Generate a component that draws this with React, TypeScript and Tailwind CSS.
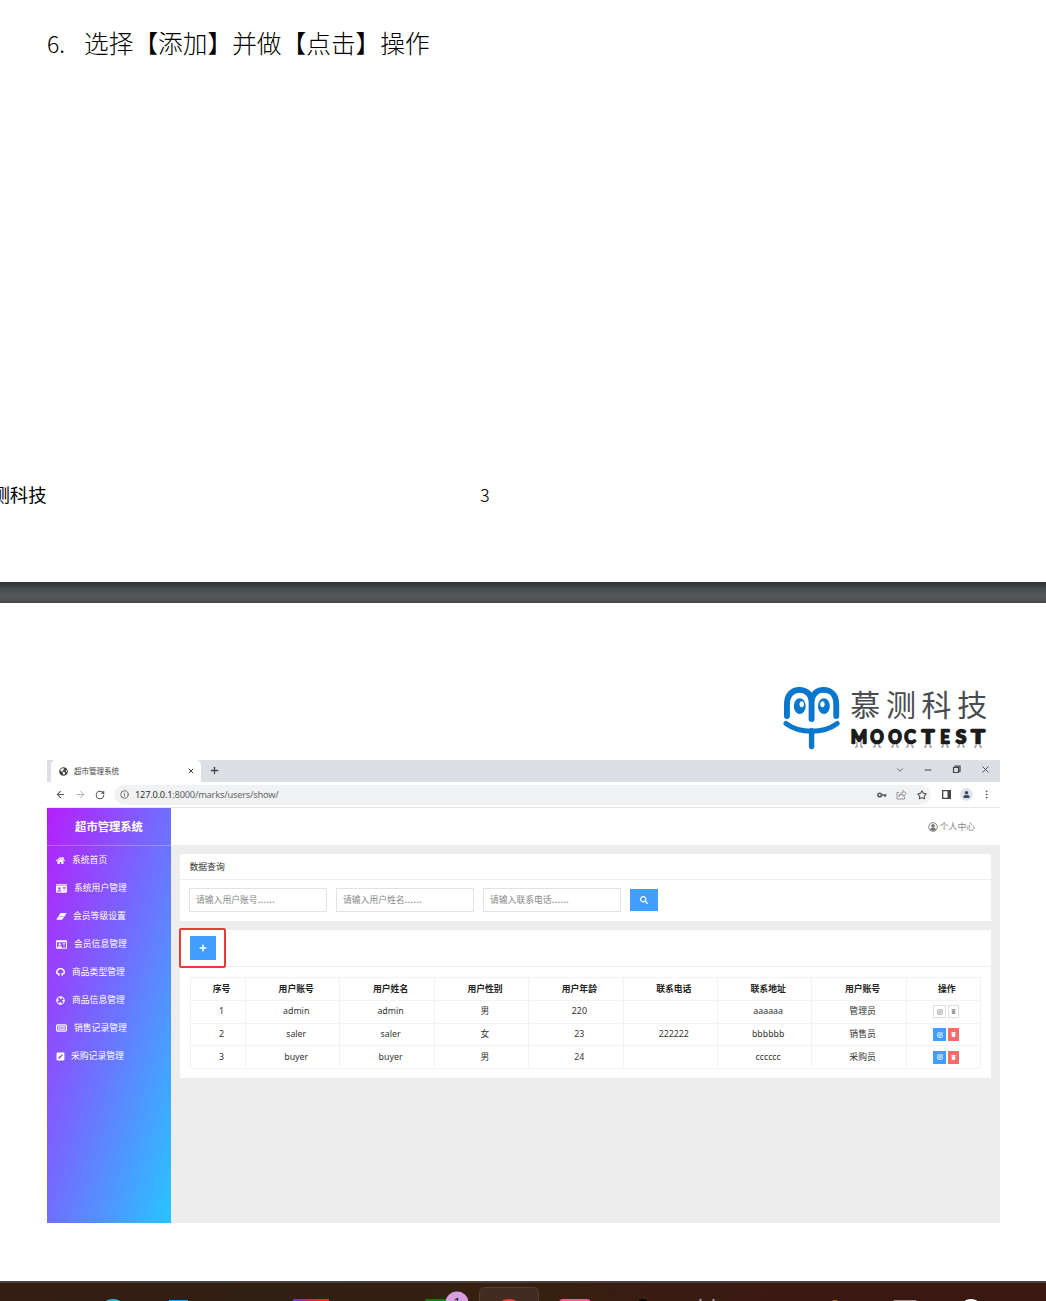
import type { ReactNode } from "react";
import {
  FaHome,
  FaIdCard,
  FaRegIdCard,
  FaPenSquare,
  FaPlus,
  FaSearch,
  FaTrash,
  FaUser,
  FaGlobeAmericas,
} from "react-icons/fa";
import {
  ArrowLeft,
  ArrowRight,
  RotateCw,
  Info,
  Star,
  EllipsisVertical,
  ChevronDown,
  Minus,
  X,
  Plus,
  SquarePen,
} from "lucide-react";

const EraserIcon = () => (
  <svg width="11" height="9" viewBox="0 0 11 9">
    <path d="M4.500 1h5.300c.5 0 .7.400.4.800L6.500 7.200c-.2.300-.5.500-.9.500H1c-.5 0-.7-.4-.4-.8z" fill="#fff" />
    <path d="M2.300 4.700h5.200" stroke="#9a50ff" strokeWidth="0.600" />
  </svg>
);

const HeadphonesIcon = () => (
  <svg width="9" height="9" viewBox="0 0 9 9" fill="none" stroke="#fff">
    <path d="M1.600 6.300A3.600 3.600 0 1 1 7.400 6.300" strokeWidth="1.500" />
    <path d="M2.800 5v2.800M6.200 5v2.800" strokeWidth="1.500" />
  </svg>
);

const LifeRingIcon = () => (
  <svg width="9" height="9" viewBox="0 0 9 9" fill="none" stroke="#fff">
    <circle cx="4.500" cy="4.500" r="3.800" strokeWidth="0.900" />
    <circle cx="4.500" cy="4.500" r="2.900" strokeWidth="2.300" strokeDasharray="2.280 2.280" strokeDashoffset="1.140" />
  </svg>
);

const KeyboardIcon = () => (
  <svg width="11" height="8" viewBox="0 0 11 8" fill="none" stroke="#fff">
    <rect x="0.500" y="0.800" width="10" height="6.400" rx="0.500" fill="#fff" fillOpacity="0.350" />
    <path d="M2 2.800h7M2 5.200h7" strokeWidth="1" strokeDasharray="1.600 0.500" />
  </svg>
);

const UserRingIcon = () => (
  <svg width="10" height="10" viewBox="0 0 10 10">
    <circle cx="5" cy="5" r="4.300" fill="none" stroke="#777" strokeWidth="0.900" />
    <circle cx="5" cy="3.900" r="1.800" fill="#777" />
    <path d="M2 7.600c.4-1.600 1.400-1.900 3-1.900s2.600.3 3 1.900C7 8.700 6 8.900 5 8.900S3 8.700 2 7.600z" fill="#777" />
  </svg>
);

const KeyIcon = () => (
  <svg width="10" height="8" viewBox="0 0 10 8" fill="none" stroke="#555">
    <circle cx="2.700" cy="4" r="1.800" strokeWidth="1.500" />
    <path d="M4.500 4H9.500M8 4v2" strokeWidth="1.500" />
  </svg>
);

const ShareIcon = () => (
  <svg width="11" height="11" viewBox="0 0 11 11" fill="none" stroke="#888" strokeWidth="0.900" strokeLinejoin="round">
    <path d="M3 3.500H1v6.500h7.500V7.500" />
    <path d="M3 7.500C3.300 4.800 4.800 3.600 7 3.500V1.500L10.300 4.500 7 7.300V5.400C5.300 5.400 4 6 3 7.500z" />
  </svg>
);

const menu: { icon: ReactNode; label: string; gap: string }[] = [
  { icon: <FaHome size={9} />, label: "系统首页", gap: "ml-[7px]" },
  { icon: <FaIdCard size={11} />, label: "系统用户管理", gap: "ml-[7px]" },
  { icon: <EraserIcon />, label: "会员等级设置", gap: "ml-[6px]" },
  { icon: <FaRegIdCard size={11} />, label: "会员信息管理", gap: "ml-[7px]" },
  { icon: <HeadphonesIcon />, label: "商品类型管理", gap: "ml-[7px]" },
  { icon: <LifeRingIcon />, label: "商品信息管理", gap: "ml-[7px]" },
  { icon: <KeyboardIcon />, label: "销售记录管理", gap: "ml-[7px]" },
  { icon: <FaPenSquare size={9} />, label: "采购记录管理", gap: "ml-[6px]" },
];

const heads = ["序号", "用户账号", "用户姓名", "用户性别", "用户年龄", "联系电话", "联系地址", "用户账号", "操作"];
const rows = [
  ["1", "admin", "admin", "男", "220", "", "aaaaaa", "管理员"],
  ["2", "saler", "saler", "女", "23", "222222", "bbbbbb", "销售员"],
  ["3", "buyer", "buyer", "男", "24", "", "cccccc", "采购员"],
];

const letters: [string, number, number][] = [
  ["M", 9, 18],
  ["O", 27, 15],
  ["O", 45, 15],
  ["C", 60, 13],
  ["T", 78, 14],
  ["E", 95, 11],
  ["S", 111, 12],
  ["T", 128, 15],
];

function Logo() {
  return (
    <div className="ml-[783px] mt-[82px] flex h-[66px] w-[210px]">
      <svg className="h-[66px] w-[58px]" viewBox="0 0 58 66" fill="none" stroke="#0877cc" strokeLinecap="round">
        <path d="M4 31V19C4 9 10 4.500 16.500 4.500C23.500 4.500 29 9 29 16.500V34M29 16.500C29 9 34.500 4.500 41 4.500C48 4.500 54 9 54 19V31" strokeWidth="6" />
        <path d="M3 38.500C17 49 41 49 55 38.500" strokeWidth="5" />
        <path d="M29 46V62" strokeWidth="5.500" />
        <ellipse cx="17" cy="21" rx="6" ry="8" fill="#0877cc" stroke="none" />
        <ellipse cx="41.500" cy="21" rx="6" ry="8" fill="#0877cc" stroke="none" />
        <ellipse cx="19" cy="19" rx="2.200" ry="3" fill="#fff" stroke="none" />
        <ellipse cx="40" cy="19" rx="2.200" ry="3" fill="#fff" stroke="none" />
      </svg>
      <div className="ml-[10px] flex flex-col">
        <div className="h-[42px] whitespace-nowrap text-[30px] leading-[36px] tracking-[5.700px] text-[#484b50] font-['Noto_Sans_CJK_SC',sans-serif]">
          慕测科技
        </div>
        <svg className="h-[22px] w-[140px]" viewBox="0 0 140 22">
          {letters.map(([c, x, w], i) => (
            <g key={i}>
              <path
                d={`M${x - 2} 15v5h-2M${x + 2} 15v5h2`}
                stroke="#555"
                strokeWidth="0.8"
                fill="none"
              />
              <text
                x={x}
                y="15.500"
                textAnchor="middle"
                textLength={w - 2}
                lengthAdjust="spacingAndGlyphs"
                fontSize="16.500"
                fontFamily="Lato, sans-serif"
                fill="#1c1c1c"
                stroke="#1c1c1c"
                strokeWidth="2.4"
                strokeLinejoin="round"
                strokeLinecap="round"
              >
                {c}
              </text>
            </g>
          ))}
        </svg>
      </div>
    </div>
  );
}

function BrowserChrome() {
  return (
    <>
      <div className="flex h-[22px] items-end bg-[#dcdfe4] text-[#444]">
        <div className="ml-[4px] flex h-[22px] w-[150px] items-center rounded-t-[5px] bg-white pl-[8px] pr-[6px]">
          <FaGlobeAmericas size={9} />
          <span className="ml-[6px] mt-[2px] text-[7.500px] leading-none text-[#444]">超市管理系统</span>
          <X size={8} strokeWidth={3} className="ml-auto" />
        </div>
        <Plus size={11} strokeWidth={2.800} className="mb-[6px] ml-[8px]" />
        <div className="mb-[7px] ml-auto mr-[9px] flex items-center">
          <ChevronDown size={10} strokeWidth={1.800} />
          <Minus size={10} strokeWidth={2.500} className="ml-[18px]" />
          <svg width="9" height="9" viewBox="0 0 9 9" className="ml-[19px]" fill="none" stroke="#444">
            <path d="M1.500 2.500h5v5h-5zM3 2.500V1.200h5V6.500H6.500" strokeWidth="1.200" />
          </svg>
          <X size={11} strokeWidth={2} className="ml-[19px]" />
        </div>
      </div>
      <div className="flex h-[26px] items-center border-b border-[#e6e6e6] bg-white text-[#555]">
        <ArrowLeft size={11} strokeWidth={2.200} className="ml-[8px]" />
        <ArrowRight size={11} strokeWidth={2} className="ml-[9px] text-[#aaa]" />
        <RotateCw size={10} strokeWidth={2.500} className="ml-[9px]" />
        <div className="ml-[9px] flex h-[20px] w-[817px] items-center rounded-full bg-[#f1f2f4] pl-[6px] pr-[4px]">
          <Info size={9} strokeWidth={2.200} />
          <span className="ml-[6px] text-[9.300px] leading-none tracking-[-0.230px] text-[#666]">
            <span className="text-[#333]">127.0.0.1</span>:8000/marks/users/show/
          </span>
          <span className="ml-auto">
            <KeyIcon />
          </span>
          <span className="ml-[9px]">
            <ShareIcon />
          </span>
          <Star size={10} strokeWidth={2.500} className="ml-[10px]" />
        </div>
        <svg width="9" height="9" viewBox="0 0 9 9" className="ml-[11px]">
          <path d="M0.700 0.700h7.600v7.600h-7.600z" fill="none" stroke="#444" strokeWidth="1.300" />
          <path d="M5.500 1h3v7h-3z" fill="#444" />
        </svg>
        <div className="ml-[9px] flex size-[13px] items-center justify-center rounded-full bg-[#dfe3ec] text-[#3d4460]">
          <FaUser size={7} />
        </div>
        <EllipsisVertical size={11} strokeWidth={2} className="ml-[8px]" />
      </div>
    </>
  );
}

function Sidebar() {
  return (
    <nav className="h-[415px] w-[124px] bg-[linear-gradient(to_bottom_right,#b51ffb_0%,#706fff_50%,#27c5ff_100%)] text-white">
      <div className="flex h-[38px] items-center justify-center border-b border-white/25 pt-[1px] text-[11.300px] font-bold">
        超市管理系统
      </div>
      {menu.map((m) => (
        <div key={m.label} className="flex h-[28px] items-center pl-[9px] text-[8.800px]">
          {m.icon}
          <span className={`${m.gap} pt-[2px]`}>{m.label}</span>
        </div>
      ))}
    </nav>
  );
}

function Actions({ disabled }: { disabled: boolean }) {
  return (
    <div className="flex items-center justify-center gap-[2px]">
      <span
        className={
          disabled
            ? "flex h-[13px] w-[13px] items-center justify-center border border-[#ddd] text-[#999]"
            : "flex h-[13px] w-[13px] items-center justify-center bg-[#409eff] text-white"
        }
      >
        <SquarePen size={6} strokeWidth={3.500} />
      </span>
      <span
        className={
          disabled
            ? "flex h-[13px] w-[11px] items-center justify-center border border-[#ddd] text-[#999]"
            : "flex h-[13px] w-[11px] items-center justify-center bg-[#f56c6c] text-white"
        }
      >
        <FaTrash size={5} />
      </span>
    </div>
  );
}

function Content() {
  return (
    <main className="flex-1 bg-[#ededed]">
      <div className="flex h-[37px] items-center justify-end bg-white pr-[25px] text-[8.800px] text-[#888]">
        <UserRingIcon />
        <span className="ml-[2px] pt-[2px]">个人中心</span>
      </div>
      <section className="ml-[9px] mt-[9px] h-[67px] w-[811px] bg-white text-[8.800px] text-[#333]">
        <div className="flex h-[26px] items-center border-b border-[#eee] pl-[9.500px] pt-[2px]">数据查询</div>
        <div className="flex items-center gap-[9px] pl-[9px] pt-[8px] text-[#888]">
          {["请输入用户账号", "请输入用户姓名", "请输入联系电话"].map((p) => (
            <div key={p} className="flex h-[24px] w-[138px] items-center border border-[#e2e2e4] pl-[6px] leading-none">
              {p}
              <span className="-mt-[3px] text-[11px]">……</span>
            </div>
          ))}
          <div className="flex h-[22px] w-[28px] items-center justify-center bg-[#409eff] text-white">
            <FaSearch size={8} />
          </div>
        </div>
      </section>
      <section className="ml-[9px] mt-[9px] h-[148px] w-[811px] bg-white text-[8.800px] text-[#333]">
        <div className="relative flex h-[37px] items-center border-b border-[#eee] pl-[10px]">
          <div className="flex h-[24px] w-[26px] items-center justify-center bg-[#409eff] text-white">
            <FaPlus size={8} />
          </div>
          <div className="absolute left-[-1px] top-[-2px] h-[40px] w-[47px] rounded-[2px] border-2 border-[#ea3a35]" />
        </div>
        <table className="ml-[10px] mt-[10px] w-[791px] table-fixed border-collapse text-center leading-none">
          <colgroup>
            <col className="w-[55px]" />
            {[0, 1, 2, 3, 4, 5, 6].map((c) => (
              <col key={c} className="w-[94.400px]" />
            ))}
            <col />
          </colgroup>
          <thead>
            <tr className="h-[23px] text-[#222]">
              {heads.map((h, i) => (
                <th key={i} className="border border-[#f2f2f2] p-0 pl-[7px] font-bold">
                  {h}
                </th>
              ))}
            </tr>
          </thead>
          <tbody>
            {rows.map((r, i) => (
              <tr key={i} className="h-[22.700px]">
                {r.map((c, j) => (
                  <td key={j} className="border border-[#f2f2f2] p-0 pl-[7px]">
                    {c}
                  </td>
                ))}
                <td className="border border-[#f2f2f2] p-0 pl-[6px]">
                  <Actions disabled={i === 0} />
                </td>
              </tr>
            ))}
          </tbody>
        </table>
      </section>
    </main>
  );
}

function Taskbar() {
  return (
    <footer className="h-[20px] border-t-2 border-[#4b4040] bg-[linear-gradient(90deg,#351e13_0%,#302013_25%,#37200f_52%,#3b1913_75%,#3a1812_100%)]">
      <svg className="block h-[18px] w-full" viewBox="0 0 1046 18">
        <rect x="479.500" y="4.500" width="59" height="30" rx="5" fill="#422c22" stroke="#523d33" />
        <circle cx="113" cy="30" r="14" fill="#27c2dc" />
        <rect x="169" y="17" width="19" height="5" fill="#18aaf2" />
        <defs>
          <linearGradient id="bar">
            <stop offset="0" stopColor="#643cc5" />
            <stop offset="0.700" stopColor="#ff2020" />
          </linearGradient>
        </defs>
        <rect x="293" y="16" width="36" height="5" fill="url(#bar)" />
        <rect x="425" y="16" width="30" height="6" rx="2" fill="#147a14" />
        <circle cx="457" cy="20" r="11.500" fill="#d89ee2" />
        <text x="457" y="24" textAnchor="middle" fontSize="13" fontFamily="Liberation Sans, sans-serif" fill="#111">1</text>
        <circle cx="509" cy="31" r="15" fill="#f04438" />
        <rect x="559" y="16" width="32" height="8" rx="4" fill="#ff5b94" />
        <circle cx="643" cy="22" r="6" fill="#000" />
        <path d="M700.500 16v2M713.500 16v2" stroke="#a9a4a4" strokeWidth="2" />
        <circle cx="835" cy="21" r="4" fill="#c87820" />
        <rect x="893" y="17" width="24" height="5" rx="2" fill="#a09490" />
        <circle cx="971" cy="28" r="12" fill="#fff" />
      </svg>
    </footer>
  );
}

export default function App() {
  return (
    <div className="flex h-[1301px] w-[1046px] flex-col overflow-hidden bg-white font-['Noto_Sans','Noto_Sans_CJK_SC',sans-serif]">
      <section className="flex h-[582px] flex-col text-black font-['Noto_Sans_CJK_SC',sans-serif]">
        <div className="ml-[47px] mt-[24px] flex h-[38px] items-center whitespace-pre text-[24.700px] font-light">
          <span className="w-[37px] text-[23px]">6.</span>
          <span>选择【添加】并做【点击】操作</span>
        </div>
        <div className="ml-[-27px] mt-[418px] flex h-[30px] items-center text-[18.400px]">
          <span className="w-[507px]">慕测科技</span>
          <span className="-mt-[2px] text-[18px] font-light">3</span>
        </div>
      </section>
      <div className="h-[21px] bg-[linear-gradient(#2d3134_0%,#444a4d_30%,#525659_60%,#505457_85%,#43474a_100%)]" />
      <section className="h-[678px]">
        <Logo />
        <div className="ml-[47px] mt-[9px] h-[463px] w-[953px]">
          <BrowserChrome />
          <div className="flex">
            <Sidebar />
            <Content />
          </div>
        </div>
      </section>
      <Taskbar />
    </div>
  );
}
